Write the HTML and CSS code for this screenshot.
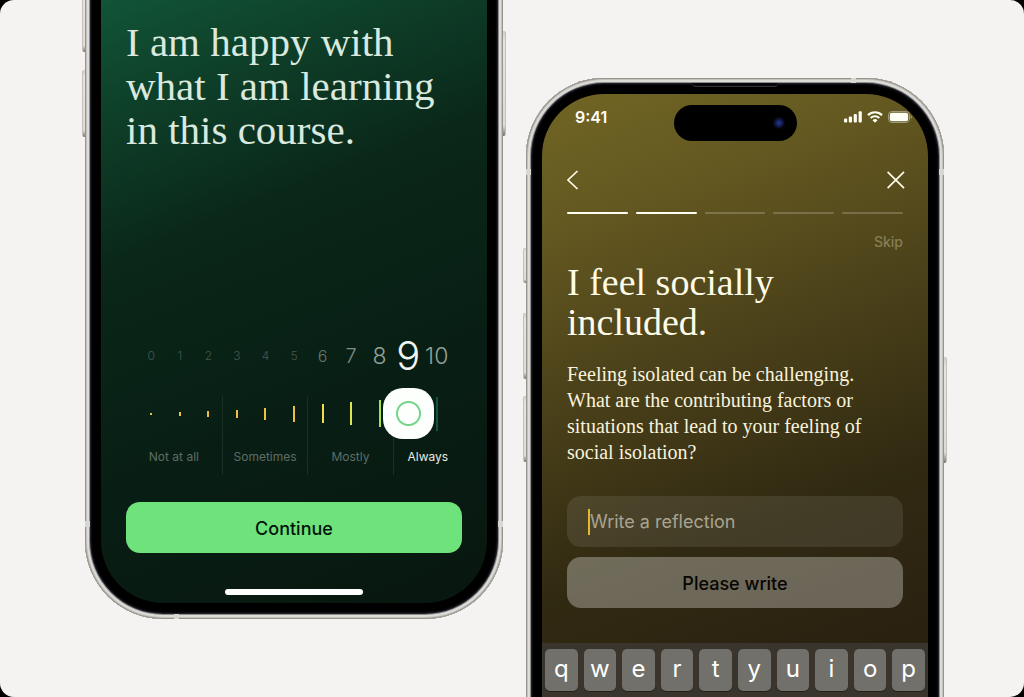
FILE: index.html
```html
<!DOCTYPE html>
<html lang="en">
<head>
    <meta charset="UTF-8">
    <meta name="viewport" content="width=device-width, initial-scale=1.0">
    <title>Course reflection</title>
    <link rel="stylesheet" href="styles.css">
</head>
<body>

    <main class="stage">

        <!-- Rating screen -->
        <section class="phone phone-rating">
            <span class="side-button left silent"></span>
            <span class="side-button left volume"></span>
            <span class="side-button right power"></span>
            <span class="antenna side"></span>
            <span class="antenna edge"></span>

            <div class="screen screen-green">
                <h1 class="statement">I am happy with what I am learning in this course.</h1>

                <div class="scale">
                    <div class="numbers">
                        <span>0</span>
                        <span>1</span>
                        <span>2</span>
                        <span>3</span>
                        <span>4</span>
                        <span>5</span>
                        <span class="near-3">6</span>
                        <span class="near-2">7</span>
                        <span class="near-1">8</span>
                        <span class="current">9</span>
                        <span class="near-1">10</span>
                    </div>

                    <div class="track">
                        <div class="zones">
                            <span>Not at all</span>
                            <span>Sometimes</span>
                            <span>Mostly</span>
                            <span class="active">Always</span>
                        </div>
                        <div class="ticks">
                            <i class="t0"></i>
                            <i class="t1"></i>
                            <i class="t2"></i>
                            <i class="t3"></i>
                            <i class="t4"></i>
                            <i class="t5"></i>
                            <i class="t6"></i>
                            <i class="t7"></i>
                            <i class="t8"></i>
                            <i class="t9"></i>
                            <i class="t10"></i>
                        </div>
                        <input class="slider" type="range" min="0" max="10" value="9" aria-label="How often is this true for you">
                    </div>
                </div>

                <button class="button button-green" type="button">Continue</button>
                <div class="home-bar"></div>
            </div>
        </section>

        <!-- Reflection screen -->
        <section class="phone phone-reflection">
            <span class="side-button left action"></span>
            <span class="side-button left volume-up"></span>
            <span class="side-button left volume-down"></span>
            <span class="side-button right power"></span>
            <span class="antenna side"></span>
            <span class="antenna edge"></span>
            <span class="speaker"></span>

            <div class="screen screen-olive">
                <div class="status">
                    <span class="time">9:41</span>
                    <div class="island"><span class="camera"></span></div>
                    <div class="status-icons">
                        <svg width="18" height="12" viewBox="0 0 18 12" fill="#fffef5">
                            <rect x="0" y="7.5" width="3.2" height="4" rx="1"/>
                            <rect x="4.8" y="5.5" width="3.2" height="6" rx="1"/>
                            <rect x="9.7" y="3" width="3.2" height="8.5" rx="1"/>
                            <rect x="14.6" y=".3" width="3.2" height="11.2" rx="1"/>
                        </svg>
                        <svg width="16" height="12" viewBox="0 0 16 12" fill="none" stroke="#fffef5" stroke-width="2.2">
                            <path d="M1 4.1a10 10 0 0 1 14 0"/>
                            <path d="M3.7 7a6.1 6.1 0 0 1 8.6 0"/>
                            <path d="M8 11.8 5.5 9.3a3.5 3.5 0 0 1 5 0z" fill="#fffef5" stroke="none"/>
                        </svg>
                        <svg width="24" height="12" viewBox="0 0 24 12">
                            <rect x=".5" y=".5" width="21" height="11" rx="3.5" fill="none" stroke="#fff" stroke-opacity=".4"/>
                            <rect x="1.8" y="1.8" width="18.4" height="8.4" rx="2.2" fill="#fffef5"/>
                            <path d="M22.6 4v4c.8-.3 1.3-1.1 1.3-2s-.5-1.7-1.3-2z" fill="#fff" fill-opacity=".4"/>
                        </svg>
                    </div>
                </div>

                <div class="content">
                    <nav class="nav">
                        <button class="icon-button" type="button" aria-label="Back">
                            <svg width="12" height="20" viewBox="0 0 12 20" fill="none" stroke="#fffbe8" stroke-width="1.7">
                                <path d="M10.5 1 1 10l9.5 9"/>
                            </svg>
                        </button>
                        <button class="icon-button close" type="button" aria-label="Close">
                            <svg width="18" height="18" viewBox="0 0 18 18" fill="none" stroke="#fffbe8" stroke-width="1.7">
                                <path d="M.6.8l16.4 16.4M17 .8.6 17.2"/>
                            </svg>
                        </button>
                    </nav>

                    <div class="steps">
                        <span class="done"></span>
                        <span class="done"></span>
                        <span></span>
                        <span></span>
                        <span></span>
                    </div>

                    <a class="skip" href="#">Skip</a>

                    <h2 class="title">I feel socially included.</h2>
                    <p class="text">Feeling isolated can be challenging. What are the contributing factors or situations that lead to your feeling of social isolation?</p>

                    <label class="field">
                        <span class="caret"></span>
                        <input type="text" placeholder="Write a reflection" aria-label="Write a reflection">
                    </label>
                    <button class="button button-muted" type="button">Please write</button>
                </div>

                <div class="keyboard">
                    <button type="button">q</button>
                    <button type="button">w</button>
                    <button type="button">e</button>
                    <button type="button">r</button>
                    <button type="button">t</button>
                    <button type="button">y</button>
                    <button type="button">u</button>
                    <button type="button">i</button>
                    <button type="button">o</button>
                    <button type="button">p</button>
                </div>
            </div>
        </section>

    </main>

</body>
</html>
```
FILE: styles.css
```css
* {
    box-sizing: border-box;
}

body {
    margin: 0;
    background-color: #000;
    font-family: Inter, 'Liberation Sans', sans-serif;
}

h1, h2, p {
    margin: 0;
    font-family: 'Liberation Serif', 'Times New Roman', serif;
    font-weight: 400;
}

button, input {
    margin: 0;
    padding: 0;
    border: 0;
    font-family: inherit;
}

.stage {
    display: flex;
    justify-content: center;
    gap: 23px;
    min-height: 100vh;
    padding-left: 5px;
    background-color: #f5f3f2;
    border-radius: 14px;
    overflow: hidden;
}

/* Phone body */
.phone {
    position: relative;
    display: flex;
    flex: 0 1 418px;
    background-color: #000;
    box-shadow: inset 0 0 0 1px #98958f, inset 0 0 0 2px #c4c1bb, inset 0 0 0 4px #dddcd8, inset 0 0 0 5px #8d8d8b, inset 0 0 2px 6px #2a2a38;
}

/* the frame runs past the page edge, so no line is drawn there */
.phone-rating {
    margin-top: -10px;
    margin-bottom: 78px;
    padding: 10px 16px 16px;
    border-radius: 0 0 78px 78px;
}

.phone-reflection {
    margin-top: 78px;
    margin-bottom: -10px;
    padding: 16px 16px 10px;
    border-radius: 78px 78px 0 0;
}

.side-button {
    position: absolute;
    width: 3px;
    background: linear-gradient(#cfccc6, #e6e4e0 10%, #dedcd7 90%, #77746f);
}

.side-button.left {
    left: -3px;
    border-left: 1px solid #c4c1bb;
    border-radius: 2px 0 0 2px;
}

.side-button.right {
    right: -3px;
    border-right: 1px solid #c4c1bb;
    border-radius: 0 2px 2px 0;
}

.phone-rating .silent {
    top: 0;
    height: 62px;
}

.phone-rating .volume {
    top: 80px;
    height: 67px;
}

.phone-rating .power {
    top: 41px;
    height: 105px;
}

.phone-reflection .action {
    top: 170px;
    height: 35px;
}

.phone-reflection .volume-up {
    top: 235px;
    height: 66px;
}

.phone-reflection .volume-down {
    top: 318px;
    height: 66px;
}

.phone-reflection .power {
    top: 279px;
    height: 106px;
}

.antenna {
    position: absolute;
    background-color: #d9d7d2;
}

.antenna.side {
    left: 0;
    right: 0;
    height: 6px;
    background: linear-gradient(90deg, #d9d7d2 5px, transparent 5px, transparent calc(100% - 5px), #d9d7d2 calc(100% - 5px));
}

.antenna.edge {
    width: 5px;
    height: 5px;
}

.phone-rating .antenna.side {
    bottom: 92px;
}

.phone-rating .antenna.edge {
    left: 89px;
    bottom: 0;
}

.phone-reflection .antenna.side {
    top: 91px;
}

.phone-reflection .antenna.edge {
    right: 88px;
    top: 0;
}

.speaker {
    position: absolute;
    top: 5px;
    left: 50%;
    width: 86px;
    height: 4px;
    margin-left: -43px;
    background-color: #08080c;
    border-bottom: 1px solid #37363c;
    border-radius: 0 0 4px 4px;
}

.screen {
    display: flex;
    flex-direction: column;
    flex: 1;
    min-width: 0;
    overflow: hidden;
}

/* Rating screen */
.screen-green {
    padding: 20px 25px 8px;
    background: linear-gradient(158deg, #115436 0%, #0e3e28 17%, #0a2719 36%, #081e14 65%, #08170f 100%);
    border-radius: 0 0 62px 62px;
}

.statement {
    color: #d9e9df;
    font-size: 41px;
    line-height: 44px;
}

.scale {
    margin-top: auto;
    padding-top: 24px;
}

.numbers {
    display: grid;
    grid-template-columns: repeat(11, minmax(0, 1fr));
    align-items: center;
    justify-items: center;
    height: 40px;
    margin: 0 11px 17px;
    color: #46574e;
    font-size: 12px;
    font-weight: 300;
}

.numbers .near-3 {
    color: #66766d;
    font-size: 16px;
}

.numbers .near-2 {
    color: #7f8d86;
    font-size: 20px;
}

.numbers .near-1 {
    color: #93a099;
    font-size: 23px;
}

.numbers .current {
    color: #f0f5f2;
    font-size: 40px;
}

.track {
    display: grid;
    grid-template-columns: minmax(0, 1fr);
    align-items: start;
}

.zones, .ticks, .slider {
    grid-area: 1 / 1;
}

.zones {
    display: grid;
    grid-template-columns: 34fr 30fr 30fr 24fr;
    height: 79px;
    margin-top: 8px;
    color: #5d6d65;
    font-size: 12px;
    line-height: 16px;
    text-align: center;
}

.zones span {
    padding-top: 53px;
    border-right: 1px solid #1a3025;
}

.zones .active {
    border-right: 0;
    color: #e3ebe6;
}

.ticks {
    display: grid;
    grid-template-columns: repeat(11, minmax(0, 1fr));
    align-items: center;
    justify-items: center;
    height: 51px;
    margin: 0 11px;
}

.ticks i {
    width: 2px;
    background-color: #f0bd45;
}

.ticks .t0 { height: 2px; }
.ticks .t1 { height: 4px; }
.ticks .t2 { height: 6px; }
.ticks .t3 { height: 8px; }
.ticks .t4 { height: 12px; }
.ticks .t5 { height: 16px; }
.ticks .t6 { height: 19px; background-color: #f3dc4c; }
.ticks .t7 { height: 23px; background-color: #dce44f; }
.ticks .t8 { height: 27px; background-color: #a5e04f; }
.ticks .t9 { height: 30px; background-color: #6fe27c; }
.ticks .t10 { height: 34px; background-color: #14553a; }

.slider {
    appearance: none;
    width: 100%;
    height: 51px;
    background: transparent;
}

.slider::-webkit-slider-thumb {
    appearance: none;
    width: 51px;
    height: 51px;
    background: radial-gradient(circle, transparent 10px, #73d586 11px, #73d586 12px, transparent 13px), #fcfffc;
    border-radius: 20px;
}

.button {
    width: 100%;
    height: 51px;
    flex-shrink: 0;
    padding-top: 2px;
    border-radius: 14px;
    font-size: 18px;
    font-weight: 500;
    cursor: pointer;
}

.button-green {
    margin-top: 27px;
    background-color: #6ee37c;
    color: #04140b;
}

.home-bar {
    align-self: center;
    flex-shrink: 0;
    width: 138px;
    height: 6px;
    margin-top: 36px;
    background-color: #fff;
    border-radius: 3px;
}

/* Reflection screen */
.screen-olive {
    background: linear-gradient(160deg, #716524 0%, #625720 20%, #493f19 44%, #312a12 68%, #271e10 100%);
    border-radius: 62px 62px 0 0;
}

.status {
    display: grid;
    grid-template-columns: 1fr 123px 1fr;
    padding: 11px 16px 0;
}

.time {
    margin: 2px 0 0 17px;
    color: #fffef5;
    font-size: 16px;
    font-weight: 600;
    line-height: 20px;
}

.island {
    display: flex;
    align-items: center;
    justify-content: flex-end;
    height: 36px;
    padding-right: 12px;
    background-color: #000;
    border-radius: 18px;
}

.camera {
    width: 12px;
    height: 12px;
    background: radial-gradient(circle, #2a3a9c 0, #141c55 3px, #090b20 5px, #05060f 6px);
    border-radius: 50%;
}

.status-icons {
    display: flex;
    align-items: center;
    justify-content: flex-end;
    gap: 5px;
    height: 20px;
    margin-top: 2px;
}

.content {
    display: flex;
    flex-direction: column;
    padding: 0 25px 35px;
}

.nav {
    display: flex;
    align-items: center;
    justify-content: space-between;
    height: 20px;
    margin: 29px -2px 22px 0;
}

.icon-button {
    display: flex;
    background: none;
    cursor: pointer;
}

.steps {
    display: flex;
    gap: 8px;
}

.steps span {
    flex: 1;
    height: 2px;
    background-color: rgba(255, 255, 255, 0.2);
    border-radius: 1px;
}

.steps .done {
    background-color: #fffdf0;
}

.skip {
    align-self: flex-end;
    margin-top: 18px;
    color: #877e55;
    font-size: 14px;
    font-weight: 500;
    line-height: 20px;
    text-decoration: none;
}

.title {
    margin-top: 10px;
    max-width: 260px;
    color: #fffbe9;
    font-size: 38px;
    line-height: 40px;
}

.text {
    margin-top: 19px;
    padding-right: 32px;
    color: #f8f3dd;
    font-size: 20px;
    line-height: 26px;
}

.field {
    display: flex;
    align-items: center;
    height: 51px;
    margin: 31px 0 10px;
    padding: 0 21px;
    background-color: rgba(255, 255, 255, 0.09);
    border-radius: 14px;
}

.caret {
    width: 2px;
    height: 26px;
    background-color: #e5b92f;
}

.field input {
    flex: 1;
    min-width: 0;
    background: transparent;
    color: #fff;
    font-size: 18px;
    outline: none;
}

.field input::placeholder {
    color: #a9a492;
}

.button-muted {
    background-color: rgba(255, 255, 255, 0.3);
    color: #060500;
}

.keyboard {
    display: grid;
    grid-template-columns: repeat(10, minmax(0, 1fr));
    align-items: start;
    gap: 6px;
    flex: 1;
    padding: 6px 3px 0;
    background-color: #3a352c;
}

.keyboard button {
    height: 42px;
    padding-bottom: 2px;
    background-color: #71706a;
    border-radius: 5px;
    box-shadow: 0 1px 0 #24211b;
    color: #fff;
    font-size: 24px;
    line-height: 30px;
}
```
